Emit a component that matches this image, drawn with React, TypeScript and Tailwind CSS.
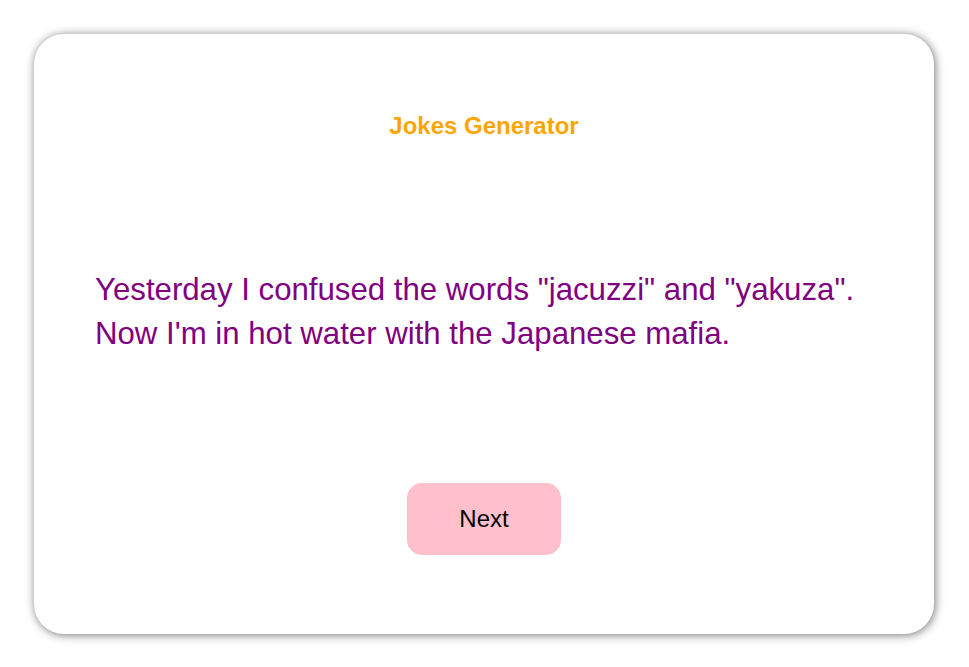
export default function App() {
  return (
    <div className="h-screen overflow-hidden bg-white font-['Liberation_Sans',Arial,sans-serif]">
      <div className="ml-[34px] mt-[34px] flex h-[600px] w-[900px] flex-col items-center rounded-[30px] bg-white px-[61px] pt-[78px] shadow-[1px_1px_10px_rgba(0,0,0,0.55)]">
        <h1 className="text-[24px] leading-[28px] font-bold text-[#ffa500]">Jokes Generator</h1>
        <p className="mt-[128px] w-full text-[31.2px] leading-[44px] text-[#800080]">
          Yesterday I confused the words "jacuzzi" and "yakuza". Now I'm in hot water with the Japanese mafia.
        </p>
        <button className="mt-[127px] h-[72px] w-[154px] shrink-0 rounded-[15px] bg-[#ffc0cb] text-[24px] text-black">
          Next
        </button>
      </div>
    </div>
  );
}
